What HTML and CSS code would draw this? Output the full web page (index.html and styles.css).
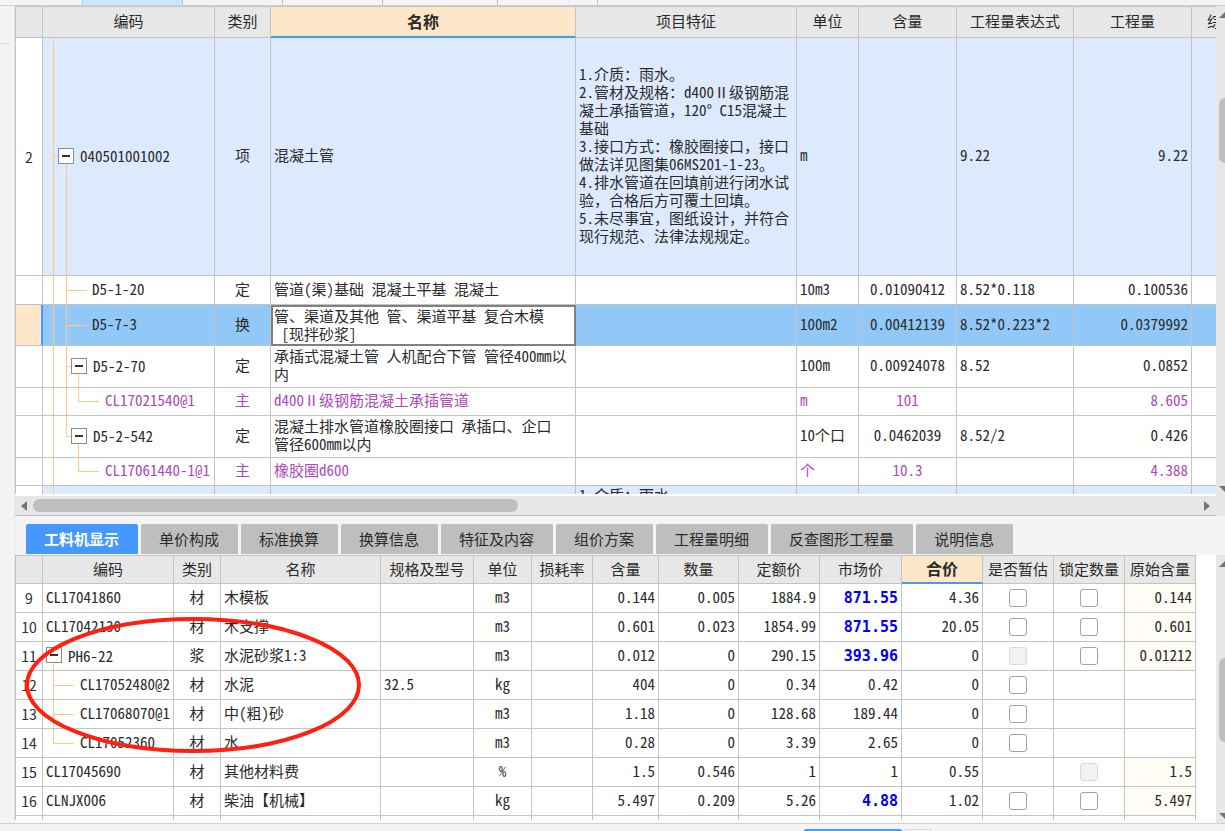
FILE: index.html
```html
<!DOCTYPE html>
<html lang="zh-CN">
<head>
<meta charset="utf-8">
<title>工料机显示</title>
<link rel="stylesheet" href="styles.css">
</head>
<body>
<div class="app">
  <div class="strip-top"><i class="st-lead"></i><i class="st-on"></i><i class="st"></i><i class="st"></i><i class="st wide"></i><i class="st"></i><i class="st"></i></div>
  <div class="work">
    <aside class="gutter"><div class="gutter-cap"></div></aside>
    <main class="panes">
      <section class="pane upper">
        <div class="view">
          <div class="clip">
          <table class="grid top">
            <colgroup><col class="w27"><col class="w172"><col class="w56"><col><col class="w221"><col class="w62"><col class="w98"><col class="w117"><col class="w118"><col class="w24"></colgroup>
            <thead><tr><th></th><th>编码</th><th>类别</th><th class="active">名称</th><th>项目特征</th><th>单位</th><th>含量</th><th>工程量表达式</th><th>工程量</th><th class="cut">综合单价</th></tr></thead>
            <tbody>
              <tr class="item tall"><td class="no">2</td><td class="tree a-root i1"><button class="tg" aria-label="折叠"></button><span>040501001002</span></td><td class="c">项</td><td>混凝土管</td>
                <td class="txt"><span class="hw">1.</span>介质：雨水。<br><span class="hw">2.</span>管材及规格：<span class="hw">d400</span>Ⅱ级钢筋混<br>凝土承插管道，<span class="hw">120° C15</span>混凝土<br>基础<br><span class="hw">3.</span>接口方式：橡胶圈接口，接口<br>做法详见图集<span class="hw">06MS201-1-23</span>。<br><span class="hw">4.</span>排水管道在回填前进行闭水试<br>验，合格后方可覆土回填。<br><span class="hw">5.</span>未尽事宜，图纸设计，并符合<br>现行规范、法律法规规定。</td>
                <td>m</td><td></td><td>9.22</td><td class="r">9.22</td><td></td></tr>
              <tr class="h29"><td></td><td class="tree a-leaf i2">D5-1-20</td><td class="c">定</td><td>管道(渠)基础 混凝土平基 混凝土</td><td></td><td>10m3</td><td class="c">0.01090412</td><td>8.52*0.118</td><td class="r">0.100536</td><td></td></tr>
              <tr class="sel h41"><td class="mark"></td><td class="tree a-leaf i2">D5-7-3</td><td class="c">换</td><td class="cursor txt">管、渠道及其他<span class="hw"> </span>管、渠道平基<span class="hw"> </span>复合木模<br><span class="hw"> [</span>现拌砂浆<span class="hw">]</span></td><td></td><td>100m2</td><td class="c">0.00412139</td><td>8.52*0.223*2</td><td class="r">0.0379992</td><td></td></tr>
              <tr class="h42"><td></td><td class="tree a-mid i2b"><button class="tg" aria-label="折叠"></button><span>D5-2-70</span></td><td class="c">定</td><td>承插式混凝土管 人机配合下管 管径400mm以<br>内</td><td></td><td>100m</td><td class="c">0.00924078</td><td>8.52</td><td class="r">0.0852</td><td></td></tr>
              <tr class="main h28"><td></td><td class="tree a-sub i3">CL17021540@1</td><td class="c">主</td><td class="txt"><span class="hw">d400</span>Ⅱ级钢筋混凝土承插管道</td><td></td><td>m</td><td class="c">101</td><td></td><td class="r">8.605</td><td></td></tr>
              <tr class="h42"><td></td><td class="tree a-last i2b"><button class="tg" aria-label="折叠"></button><span>D5-2-542</span></td><td class="c">定</td><td class="txt">混凝土排水管道橡胶圈接口<span class="hw"> </span>承插口、企口<br>管径<span class="hw">600mm</span>以内</td><td></td><td>10个口</td><td class="c">0.0462039</td><td>8.52/2</td><td class="r">0.426</td><td></td></tr>
              <tr class="main h28"><td></td><td class="tree a-end i3">CL17061440-1@1</td><td class="c">主</td><td>橡胶圈d600</td><td></td><td>个</td><td class="c">10.3</td><td></td><td class="r">4.388</td><td></td></tr>
              <tr class="item next"><td></td><td class="tree a-line"></td><td></td><td></td><td class="txt"><span class="hw">1.</span>介质：雨水。</td><td></td><td></td><td></td><td></td><td></td></tr>
            </tbody>
          </table>
          </div>
          <div class="hbar"><i class="left"></i><i class="thumb"></i><i class="right"></i></div>
        </div>
        <div class="vbar"><i class="up"></i><i class="thumb t1"></i><i class="down"></i></div>
      </section>
      <section class="lower">
        <nav class="tabs"><button class="tab on">工料机显示</button><button class="tab">单价构成</button><button class="tab">标准换算</button><button class="tab">换算信息</button><button class="tab">特征及内容</button><button class="tab">组价方案</button><button class="tab">工程量明细</button><button class="tab">反查图形工程量</button><button class="tab">说明信息</button></nav>
        <div class="pane">
          <div class="view low">
            <table class="grid bottom">
              <colgroup><col class="w27"><col class="w131"><col class="w47"><col><col class="w93"><col class="w58"><col class="w61"><col class="w66"><col class="w80"><col class="w81"><col class="w82"><col class="w81"><col class="w71"><col class="w71"><col class="w71"></colgroup>
              <thead><tr><th></th><th>编码</th><th>类别</th><th>名称</th><th>规格及型号</th><th>单位</th><th>损耗率</th><th>含量</th><th>数量</th><th>定额价</th><th>市场价</th><th class="active">合价</th><th>是否暂估</th><th>锁定数量</th><th>原始含量</th></tr></thead>
              <tbody>
                <tr><td class="no">9</td><td>CL17041860</td><td class="c">材</td><td>木模板</td><td></td><td class="c">m3</td><td></td><td class="r">0.144</td><td class="r">0.005</td><td class="r">1884.9</td><td class="r price">871.55</td><td class="r">4.36</td><td class="c"><input type="checkbox" aria-label="是否暂估"></td><td class="c"><input type="checkbox" aria-label="锁定数量"></td><td class="r orig">0.144</td></tr>
                <tr><td class="no">10</td><td>CL17042130</td><td class="c">材</td><td>木支撑</td><td></td><td class="c">m3</td><td></td><td class="r">0.601</td><td class="r">0.023</td><td class="r">1854.99</td><td class="r price">871.55</td><td class="r">20.05</td><td class="c"><input type="checkbox" aria-label="是否暂估"></td><td class="c"><input type="checkbox" aria-label="锁定数量"></td><td class="r orig">0.601</td></tr>
                <tr><td class="no">11</td><td class="tree b-root i0"><button class="tg" aria-label="折叠"></button><span>PH6-22</span></td><td class="c">浆</td><td>水泥砂浆1:3</td><td></td><td class="c">m3</td><td></td><td class="r">0.012</td><td class="r">0</td><td class="r">290.15</td><td class="r price">393.96</td><td class="r">0</td><td class="c"><input type="checkbox" disabled aria-label="是否暂估"></td><td class="c"><input type="checkbox" aria-label="锁定数量"></td><td class="r orig">0.01212</td></tr>
                <tr><td class="no">12</td><td class="tree b-mid i1b">CL17052480@2</td><td class="c">材</td><td>水泥</td><td>32.5</td><td class="c">kg</td><td></td><td class="r">404</td><td class="r">0</td><td class="r">0.34</td><td class="r">0.42</td><td class="r">0</td><td class="c"><input type="checkbox" aria-label="是否暂估"></td><td></td><td></td></tr>
                <tr><td class="no">13</td><td class="tree b-mid i1b">CL17068070@1</td><td class="c">材</td><td>中(粗)砂</td><td></td><td class="c">m3</td><td></td><td class="r">1.18</td><td class="r">0</td><td class="r">128.68</td><td class="r">189.44</td><td class="r">0</td><td class="c"><input type="checkbox" aria-label="是否暂估"></td><td></td><td></td></tr>
                <tr><td class="no">14</td><td class="tree b-end i1b">CL17052360</td><td class="c">材</td><td>水</td><td></td><td class="c">m3</td><td></td><td class="r">0.28</td><td class="r">0</td><td class="r">3.39</td><td class="r">2.65</td><td class="r">0</td><td class="c"><input type="checkbox" aria-label="是否暂估"></td><td></td><td></td></tr>
                <tr><td class="no">15</td><td>CL17045690</td><td class="c">材</td><td>其他材料费</td><td></td><td class="c">%</td><td></td><td class="r">1.5</td><td class="r">0.546</td><td class="r">1</td><td class="r">1</td><td class="r">0.55</td><td></td><td class="c"><input type="checkbox" disabled aria-label="锁定数量"></td><td class="r orig">1.5</td></tr>
                <tr><td class="no">16</td><td>CLNJX006</td><td class="c">材</td><td class="txt">柴油【机械】</td><td></td><td class="c">kg</td><td></td><td class="r">5.497</td><td class="r">0.209</td><td class="r">5.26</td><td class="r price">4.88</td><td class="r">1.02</td><td class="c"><input type="checkbox" aria-label="是否暂估"></td><td class="c"><input type="checkbox" aria-label="锁定数量"></td><td class="r orig">5.497</td></tr>
                <tr><td></td><td></td><td></td><td></td><td></td><td></td><td></td><td></td><td></td><td></td><td></td><td></td><td></td><td></td><td class="orig"></td></tr>
              </tbody>
            </table>
          </div>
          <div class="vbar"><i class="up"></i><i class="thumb t2"></i><i class="down"></i></div>
        </div>
        <svg class="ring" width="336" height="136" viewBox="0 0 336 136" aria-hidden="true"><ellipse cx="168" cy="68" rx="166" ry="66" fill="none" stroke="#ff2011" stroke-width="4"/></svg>
      </section>
    </main>
  </div>
  <footer class="strip-bottom"><i class="sb-on"></i><i class="sb"></i></footer>
</div>
</body>
</html>
```
FILE: styles.css
```css
* { box-sizing: border-box; }

html, body { height: 100%; }

body {
  margin: 0;
  overflow: hidden;
  background: #f4f4f4;
  color: #2a2a2a;
  font: 15px/18px "Noto Sans CJK SC", sans-serif;
}

i { display: block; flex: none; }

.app { display: flex; flex-direction: column; height: 100%; }

/* edge strips */
.strip-top { display: flex; height: 6px; border-bottom: 1px solid #cfcfcf; }
.st-lead { width: 82px; }
.st, .st-on { width: 100px; border-left: 1px solid #c4c4c4; }
.st-on { background: #cbe7fe; }
.st.wide { width: 115px; }

.strip-bottom {
  display: flex;
  gap: 3px;
  height: 8px;
  padding: 5px 0 0 804px;
  border-top: 1px solid #d0d0d0;
}
.sb-on { width: 98px; border-radius: 3px 3px 0 0; background: #4498fe; }
.sb { width: 26px; border: 1px solid #d8d8d8; border-bottom: 0; }

.work { display: flex; flex: 1; min-height: 0; }
.gutter { width: 15px; border-right: 1px solid #e6e6e6; }
.gutter-cap { width: 10px; height: 38px; border-bottom: 1px solid #dcdcdc; }
.panes { display: flex; flex: 1; flex-direction: column; min-width: 0; }

.pane { display: flex; flex: 1; min-height: 0; background: #e7e7e7; }
.pane.upper { flex: 510; }
.view { display: flex; flex: 1; flex-direction: column; min-width: 0; overflow: hidden; }
.clip { flex: 1; min-height: 0; overflow: hidden; border-bottom: 2px solid #fff; }
.view.low { padding-right: 20px; background: #fff; border-bottom: 3px solid #fff; }

/* scroll bars */
.hbar {
  display: flex;
  align-items: center;
  height: 20px;
  padding: 0 6px;
  border-bottom: 1px solid #bdbdbd;
  background: #e7e7e7;
}
.hbar .thumb { width: 485px; height: 13px; margin-left: 6px; border-radius: 7px; background: #bebebe; }
.hbar .left, .hbar .right { border: 5px solid transparent; }
.hbar .left { border-left: 0; border-right: 6px solid #737379; }
.hbar .right { margin-left: auto; border-right: 0; border-left: 6px solid #737379; }

.vbar { display: flex; flex-direction: column; width: 9px; padding: 6px 0 4px 3px; overflow: hidden; background: #e7e7e7; }
.pane.upper .vbar { padding-bottom: 24px; }
.vbar .thumb { width: 13px; border-radius: 6px; background: #bebebe; }
.vbar .up, .vbar .down { width: 12px; border: 6px solid transparent; }
.vbar .up { border-top: 0; border-bottom-color: #737379; }
.vbar .down { margin-top: auto; border-bottom: 0; border-top-color: #737379; }
.t1 { height: 65px; margin-top: 80px; }
.t2 { height: 84px; margin-top: 91px; }

/* tables */
.grid { width: 100%; table-layout: fixed; border-spacing: 0; border-left: 1px solid #c3c3c3; }
.grid th, .grid td {
  padding: 0 3px 3px;
  overflow: hidden;
  border-right: 1px solid #c3c3c3;
  border-bottom: 1px solid #c3c3c3;
  white-space: nowrap;
}
.grid th { background: #e7e7e7; border-top: 1px solid #c3c3c3; padding: 0 0 2px; font-weight: 400; }
.grid th.active { border-bottom: 2px solid #4498fe; background: #fee6c8; font-size: 16px; font-weight: 700; }
.grid th.cut { padding-left: 15px; text-align: left; }
.grid td { background-color: #fff; text-align: left; font-feature-settings: "hwid"; }
.grid td.txt { font-feature-settings: normal; }
.grid .hw { font-feature-settings: "hwid"; white-space: pre; }
.grid td.c { text-align: center; }
.grid td.r { text-align: right; }
.grid td.no { padding: 0; font-size: 14px; font-feature-settings: normal; text-align: center; }
.grid td.price { padding-bottom: 1px; color: #0000f5; font: 700 15px/18px "DejaVu Sans Mono", monospace; }
.grid td.orig { background-color: #fffbf5; }

.top thead tr { height: 32px; }
.top .tall { height: 238px; }
.top .h28 { height: 28px; }
.top .h29 { height: 29px; }
.top .h41 { height: 41px; }
.top .h42 { height: 42px; }
.top .next td { height: 29px; padding-top: 0; vertical-align: top; }
.top td:last-child, .top th:last-child { border-right: 0; }
.bottom tr { height: 29px; }

.grid .item td { background-color: #ddeafe; }
.grid .item td:first-child { background-color: #fff; }
.grid .sel td { background-color: #92c8f7; }
.grid .sel td.mark { border-right: 2px solid #4498fe; background-color: #fee6c8; }
.grid .sel td.cursor { padding: 0 1px 1px; border: 2px solid #808080; background-color: #fff; }
.grid .main td { color: #ad49b9; }

.w24 { width: 24px; } .w27 { width: 27px; } .w47 { width: 47px; } .w56 { width: 56px; }
.w58 { width: 58px; } .w61 { width: 61px; } .w62 { width: 62px; } .w66 { width: 66px; }
.w71 { width: 71px; } .w80 { width: 80px; } .w81 { width: 81px; } .w82 { width: 82px; }
.w93 { width: 93px; } .w98 { width: 98px; } .w117 { width: 117px; } .w118 { width: 118px; }
.w131 { width: 131px; } .w172 { width: 172px; } .w221 { width: 221px; }

/* tree column: connectors are background layers, one vertical rule per level plus a branch */
.grid .tree {
  --k: #fdc986;
  --v1: linear-gradient(to right, transparent 10px, var(--k) 10px, var(--k) 11px, transparent 11px);
  --v2: linear-gradient(to right, transparent 23px, var(--k) 23px, var(--k) 24px, transparent 24px);
  --v3: linear-gradient(to right, transparent 35px, var(--k) 35px, var(--k) 36px, transparent 36px);
  --h: linear-gradient(to bottom, transparent 1px, var(--k) 1px, var(--k) 2px, transparent 2px);
  background-repeat: no-repeat;
}
.grid .i0 { padding-left: 3px; }
.grid .i1 { padding-left: 15px; }
.grid .i1b { padding-left: 37px; }
.grid .i2 { padding-left: 49px; }
.grid .i2b { padding-left: 28px; }
.grid .i3 { padding-left: 62px; }

.a-root { background-image: var(--v1), var(--h), var(--v2); background-position: 0 0, 10px 50%, 0 100%; background-size: 100% 100%, 6px 3px, 100% 50%; }
.a-leaf { background-image: var(--v1), var(--v2), var(--h); background-position: 0 0, 0 0, 23px 50%; background-size: 100% 100%, 100% 100%, 21px 3px; }
.a-mid { background-image: var(--v1), var(--v2), var(--h), var(--v3); background-position: 0 0, 0 0, 23px 50%, 0 100%; background-size: 100% 100%, 100% 100%, 6px 3px, 100% 50%; }
.a-sub { background-image: var(--v1), var(--v2), var(--v3), var(--h); background-position: 0 0, 0 0, 0 0, 35px 50%; background-size: 100% 100%, 100% 100%, 100% 50%, 21px 3px; }
.a-last { background-image: var(--v1), var(--v2), var(--h), var(--v3); background-position: 0 0, 0 0, 23px 50%, 0 100%; background-size: 100% 100%, 100% 50%, 6px 3px, 100% 50%; }
.a-end { background-image: var(--v1), var(--v3), var(--h); background-position: 0 0, 0 0, 35px 50%; background-size: 100% 100%, 100% 50%, 21px 3px; }
.a-line { background-image: var(--v1); background-position: 0 0; background-size: 100% 100%; }
.b-root { background-image: var(--v1); background-position: 0 100%; background-size: 100% 50%; }
.b-mid { background-image: var(--v1), var(--h); background-position: 0 0, 10px 50%; background-size: 100% 100%, 21px 3px; }
.b-end { background-image: var(--v1), var(--h); background-position: 0 0, 10px 50%; background-size: 100% 50%, 21px 3px; }

.tg {
  width: 16px;
  height: 16px;
  margin: 0 6px 0 0;
  padding: 0;
  border: 1px solid #8c8c8c;
  background: linear-gradient(#333, #333) center / 8px 2px no-repeat #fff;
  vertical-align: middle;
}
.tg + span { vertical-align: middle; }

input[type="checkbox"] {
  appearance: none;
  width: 18px;
  height: 18px;
  margin: 3px 0 0;
  border: 1px solid #a2a2a2;
  border-radius: 3px;
  background: #fff;
  vertical-align: middle;
}
input[type="checkbox"]:disabled { border-color: #dadada; background: #f2f2f2; }

/* detail panel */
.lower { position: relative; display: flex; flex: 307; flex-direction: column; min-height: 0; }
.tabs { display: flex; flex: none; gap: 3px; padding: 8px 0 1px 11px; }
.tab {
  height: 30px;
  padding: 0 19px 0 18px;
  border: 0;
  border-radius: 2px 2px 0 0;
  background: #bebebe;
  color: #2a2a2a;
  font: inherit;
  white-space: nowrap;
}
.tab.on { background: #4498fe; color: #fff; font-weight: 700; }
.ring { position: absolute; left: 10px; top: 101px; pointer-events: none; }
```
